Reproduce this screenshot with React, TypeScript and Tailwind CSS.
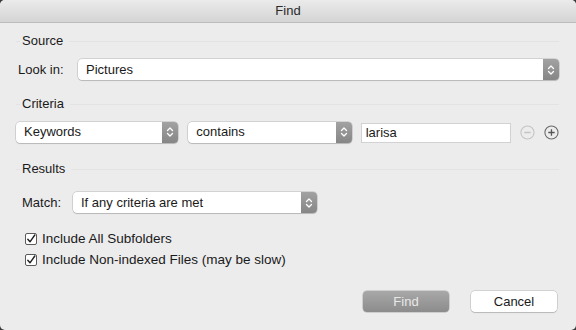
import React from 'react';

const Stepper = () => (
  <div className="w-[16px] self-stretch rounded-r-[4px] bg-gradient-to-b from-[#a2a2a2] to-[#868686] flex items-center justify-center">
    <svg width="8" height="12" viewBox="0 0 8 12" fill="none" stroke="#ffffff" strokeWidth="1.3" strokeLinecap="round" strokeLinejoin="round">
      <path d="M1.5 4.5 L4 2 L6.5 4.5" />
      <path d="M1.5 7.5 L4 10 L6.5 7.5" />
    </svg>
  </div>
);

const Select = ({ label, className }: { label: string; className: string }) => (
  <div className={`h-[21px] flex items-stretch bg-white rounded-[4px] shadow-[0_0_0_0.5px_rgba(0,0,0,0.22),0_1px_1px_rgba(0,0,0,0.12)] ${className}`}>
    <div className="flex-1 flex items-center pl-[8px] text-[13px] text-[#1a1a1a]">{label}</div>
    <Stepper />
  </div>
);

const SectionHeader = ({ title }: { title: string }) => (
  <div className="h-[16px] flex items-center">
    <div className="w-[4px] h-px bg-[#e3e3e3]" />
    <span className="ml-[2px] mr-[6px] text-[13px] text-[#1a1a1a]">{title}</span>
    <div className="flex-1 h-px bg-[#e3e3e3]" />
  </div>
);

const Checkbox = ({ label }: { label: string }) => (
  <div className="h-[16px] flex items-center">
    <div className="ml-[9px] w-[12px] h-[12px] rounded-[2px] border border-[#5a5a5a] bg-white flex items-center justify-center">
      <svg width="10" height="10" viewBox="0 0 10 10" fill="none" stroke="#222" strokeWidth="1.4" strokeLinecap="round" strokeLinejoin="round">
        <path d="M1.8 5.2 L4 7.8 L8.8 1" />
      </svg>
    </div>
    <span className="ml-[5px] text-[13.5px] text-[#1a1a1a]">{label}</span>
  </div>
);

export default function App() {
  return (
    <div className="w-[576px] h-[330px] bg-[#3a3a3a]" style={{ fontFamily: '"Liberation Sans", Arial, sans-serif' }}>
      <div className="w-full h-full rounded-[5px] bg-[#ececec] overflow-hidden flex flex-col">
        <div className="h-[23px] shrink-0 bg-gradient-to-b from-[#ebebeb] to-[#d4d4d4] border-b border-[#bcbcbc] flex items-center justify-center text-[13px] text-[#2a2a2a]">
          Find
        </div>

        <div className="pl-[16px] pr-[17px] flex flex-col">
          <div className="mt-[10px]">
            <SectionHeader title="Source" />
          </div>
          <div className="mt-[10px] flex items-center">
            <span className="ml-[2px] w-[60px] text-[13px] text-[#1a1a1a]">Look in:</span>
            <Select label="Pictures" className="flex-1" />
          </div>

          <div className="mt-[16px]">
            <SectionHeader title="Criteria" />
          </div>
          <div className="mt-[9px] flex items-center">
            <Select label="Keywords" className="w-[163px]" />
            <Select label="contains" className="ml-[10px] w-[164px]" />
            <div className="ml-[9px] mt-[2px] w-[151px] h-[20px] bg-white border border-[#d2d2d2] flex items-center pl-[4px] text-[13px] text-[#1a1a1a]">
              larisa
            </div>
            <svg className="ml-[9px]" width="15" height="15" viewBox="0 0 15 15" fill="none">
              <circle cx="7.5" cy="7.5" r="6.6" stroke="#c4c4c4" strokeWidth="1.1" />
              <path d="M4.3 7.5 H10.7" stroke="#c4c4c4" strokeWidth="1.3" />
            </svg>
            <svg className="ml-[9px]" width="15" height="15" viewBox="0 0 15 15" fill="none">
              <circle cx="7.5" cy="7.5" r="6.6" stroke="#6a6a6a" strokeWidth="1.1" />
              <path d="M4.3 7.5 H10.7 M7.5 4.3 V10.7" stroke="#555" strokeWidth="1.3" />
            </svg>
          </div>

          <div className="mt-[18px]">
            <SectionHeader title="Results" />
          </div>
          <div className="mt-[15px] flex items-center">
            <span className="ml-[6px] w-[51px] text-[13px] text-[#1a1a1a]">Match:</span>
            <Select label="If any criteria are met" className="w-[244px]" />
          </div>

          <div className="mt-[18px] flex flex-col gap-[5px]">
            <Checkbox label="Include All Subfolders" />
            <Checkbox label="Include Non-indexed Files (may be slow)" />
          </div>

          <div className="mt-[23px] flex justify-end pr-[2px] gap-[22px]">
            <div className="w-[86px] h-[21px] rounded-[4px] bg-gradient-to-b from-[#a8a8a8] to-[#8c8c8c] shadow-[0_0_0_0.5px_rgba(0,0,0,0.25)] flex items-center justify-center text-[13px] text-[#e8e8e8]">
              Find
            </div>
            <div className="w-[86px] h-[21px] rounded-[4px] bg-white shadow-[0_0_0_0.5px_rgba(0,0,0,0.22),0_1px_1px_rgba(0,0,0,0.12)] flex items-center justify-center text-[13px] text-[#1a1a1a]">
              Cancel
            </div>
          </div>
        </div>
      </div>
    </div>
  );
}
